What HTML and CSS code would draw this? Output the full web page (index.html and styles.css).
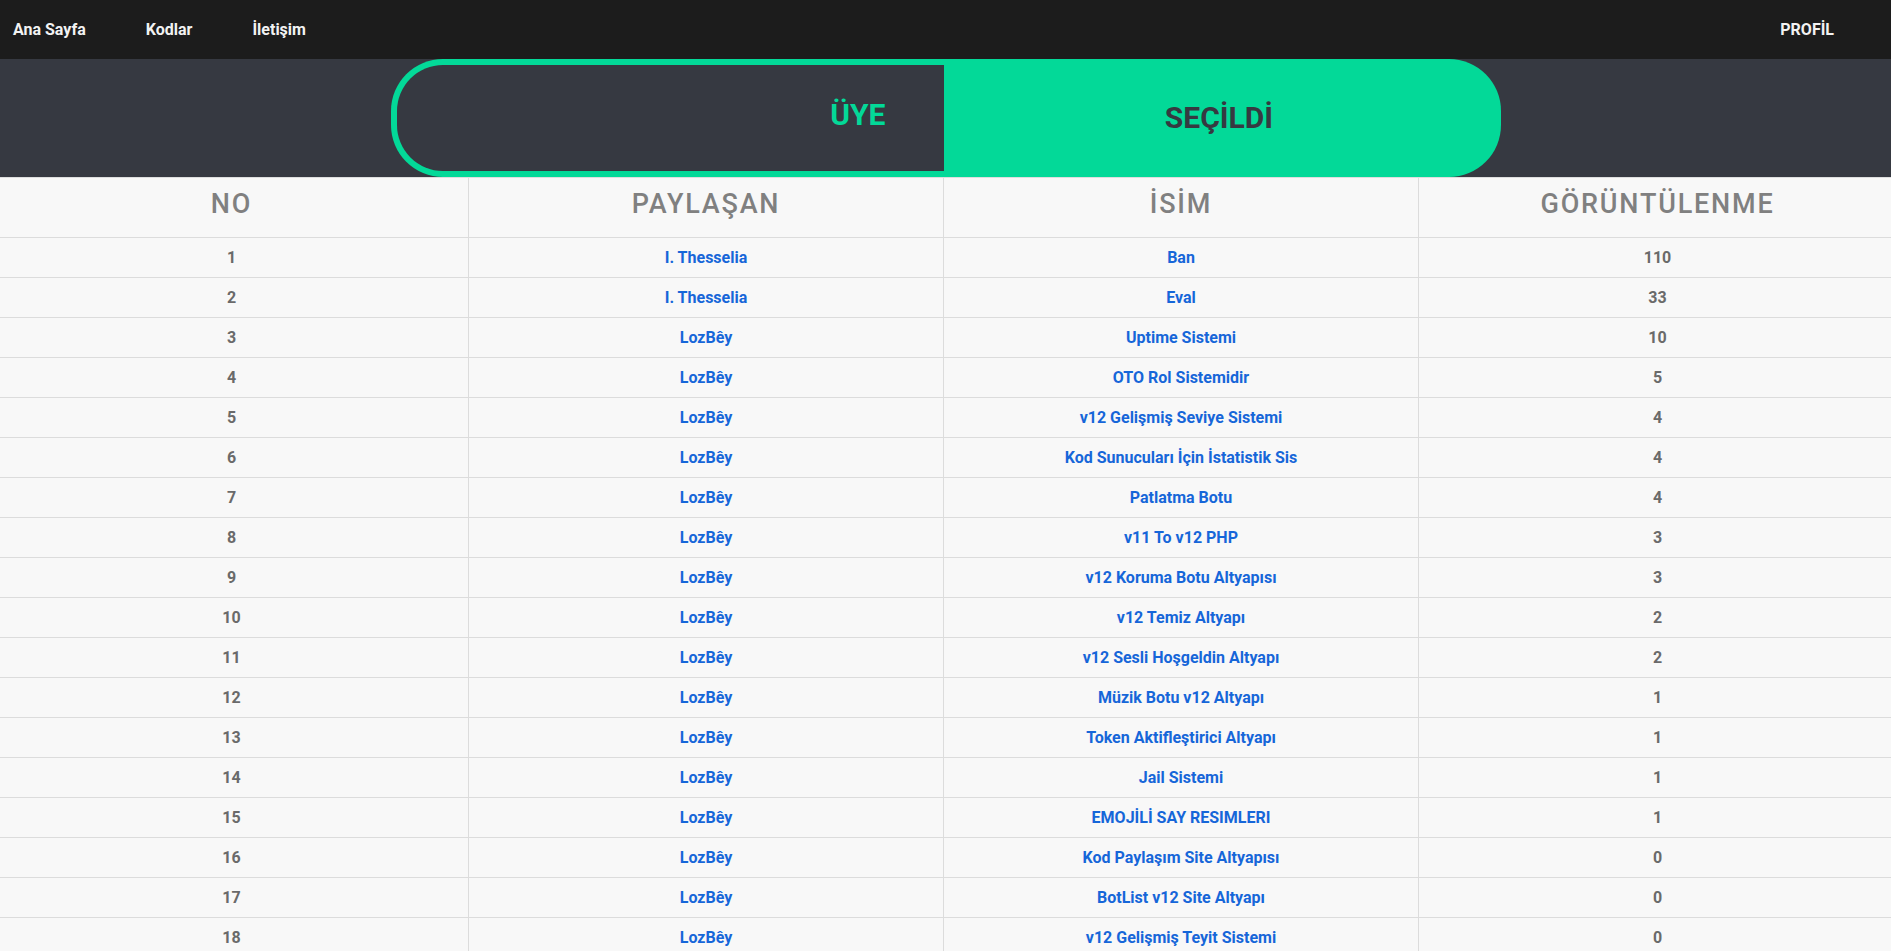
FILE: index.html
```html
<!DOCTYPE html>
<html lang="tr">
<head>
<meta charset="utf-8">
<title>Kodlar</title>
<link rel="stylesheet" href="styles.css">
</head>
<body>
<nav class="topnav">
  <ul class="nav-links">
    <li><a href="#">Ana Sayfa</a></li>
    <li><a href="#">Kodlar</a></li>
    <li><a href="#">İletişim</a></li>
  </ul>
  <a class="nav-profile" href="#">PROFİL</a>
</nav>
<section class="hero">
  <div class="toggle">
    <div class="toggle-left"><span>ÜYE</span></div>
    <div class="toggle-right"><span>SEÇİLDİ</span></div>
  </div>
</section>
<section class="table">
  <div class="row head">
    <div class="cell">NO</div>
    <div class="cell">PAYLAŞAN</div>
    <div class="cell">İSİM</div>
    <div class="cell">GÖRÜNTÜLENME</div>
  </div>
  <div class="row"><div class="cell num">1</div><div class="cell link">I. Thesselia</div><div class="cell link">Ban</div><div class="cell num">110</div></div>
  <div class="row"><div class="cell num">2</div><div class="cell link">I. Thesselia</div><div class="cell link">Eval</div><div class="cell num">33</div></div>
  <div class="row"><div class="cell num">3</div><div class="cell link">LozBêy</div><div class="cell link">Uptime Sistemi</div><div class="cell num">10</div></div>
  <div class="row"><div class="cell num">4</div><div class="cell link">LozBêy</div><div class="cell link">OTO Rol Sistemidir</div><div class="cell num">5</div></div>
  <div class="row"><div class="cell num">5</div><div class="cell link">LozBêy</div><div class="cell link">v12 Gelişmiş Seviye Sistemi</div><div class="cell num">4</div></div>
  <div class="row"><div class="cell num">6</div><div class="cell link">LozBêy</div><div class="cell link">Kod Sunucuları İçin İstatistik Sis</div><div class="cell num">4</div></div>
  <div class="row"><div class="cell num">7</div><div class="cell link">LozBêy</div><div class="cell link">Patlatma Botu</div><div class="cell num">4</div></div>
  <div class="row"><div class="cell num">8</div><div class="cell link">LozBêy</div><div class="cell link">v11 To v12 PHP</div><div class="cell num">3</div></div>
  <div class="row"><div class="cell num">9</div><div class="cell link">LozBêy</div><div class="cell link">v12 Koruma Botu Altyapısı</div><div class="cell num">3</div></div>
  <div class="row"><div class="cell num">10</div><div class="cell link">LozBêy</div><div class="cell link">v12 Temiz Altyapı</div><div class="cell num">2</div></div>
  <div class="row"><div class="cell num">11</div><div class="cell link">LozBêy</div><div class="cell link">v12 Sesli Hoşgeldin Altyapı</div><div class="cell num">2</div></div>
  <div class="row"><div class="cell num">12</div><div class="cell link">LozBêy</div><div class="cell link">Müzik Botu v12 Altyapı</div><div class="cell num">1</div></div>
  <div class="row"><div class="cell num">13</div><div class="cell link">LozBêy</div><div class="cell link">Token Aktifleştirici Altyapı</div><div class="cell num">1</div></div>
  <div class="row"><div class="cell num">14</div><div class="cell link">LozBêy</div><div class="cell link">Jail Sistemi</div><div class="cell num">1</div></div>
  <div class="row"><div class="cell num">15</div><div class="cell link">LozBêy</div><div class="cell link">EMOJİLİ SAY RESIMLERI</div><div class="cell num">1</div></div>
  <div class="row"><div class="cell num">16</div><div class="cell link">LozBêy</div><div class="cell link">Kod Paylaşım Site Altyapısı</div><div class="cell num">0</div></div>
  <div class="row"><div class="cell num">17</div><div class="cell link">LozBêy</div><div class="cell link">BotList v12 Site Altyapı</div><div class="cell num">0</div></div>
  <div class="row"><div class="cell num">18</div><div class="cell link">LozBêy</div><div class="cell link">v12 Gelişmiş Teyit Sistemi</div><div class="cell num">0</div></div>
</section>
</body>
</html>
```

FILE: styles.css
```css
* { box-sizing: border-box; }

html, body {
  margin: 0;
  padding: 0;
  background: #f8f8f8;
  font-family: Roboto, "Liberation Sans", Arial, sans-serif;
}

a { text-decoration: none; color: inherit; }

.topnav {
  height: 59px;
  background: #1c1c1c;
  display: flex;
  align-items: center;
  justify-content: space-between;
  padding: 0 57px 0 13px;
}

.nav-links {
  list-style: none;
  margin: 0;
  padding: 0;
  display: flex;
  gap: 60px;
}

.nav-links a,
.nav-profile {
  color: #f2f2f2;
  font-size: 16px;
  font-weight: 700;
}

.hero {
  height: 118px;
  background: #363941;
  display: flex;
  justify-content: center;
}

.toggle {
  width: 1110px;
  height: 118px;
  background: #03d998;
  border-radius: 52px;
  display: flex;
}

.toggle-left {
  flex: 0 0 547px;
  margin: 6px 0 6px 6px;
  background: #363941;
  border-radius: 46px 0 0 46px;
  display: flex;
  align-items: center;
  justify-content: flex-end;
  padding: 0 58px 8px 0;
  color: #03d998;
  font-size: 30px;
  font-weight: 700;
}

.toggle-right {
  flex: 1;
  display: flex;
  align-items: center;
  justify-content: center;
  padding: 0 6px 2px 0;
  color: #363941;
  font-size: 30px;
  font-weight: 700;
}

.table {
  border-top: 1px solid #dedede;
}

.row {
  display: grid;
  grid-template-columns: 469fr 475fr 475fr 472fr;
  height: 40px;
  border-bottom: 1px solid #dcdcdc;
}

.row.head {
  height: 60px;
}

.cell {
  display: flex;
  align-items: center;
  justify-content: center;
  border-right: 1px solid #dcdcdc;
  font-size: 16px;
  font-weight: 700;
}

.cell:first-child { padding-right: 5px; }
.cell:last-child { border-right: none; padding-left: 5px; }

.head .cell {
  font-size: 27px;
  font-weight: 500;
  letter-spacing: 1.8px;
  color: #808080;
  padding-bottom: 8px;
}

.cell.num { color: #6a6a6a; }
.cell.link { color: #1666d9; }
```
